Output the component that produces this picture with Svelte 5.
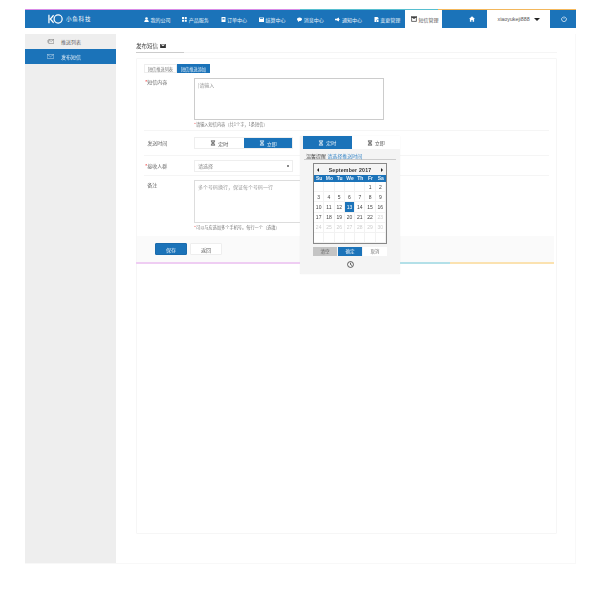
<script>
  const nav = [
    ['user', '我的公司'], ['grid', '产品服务'], ['order', '订单中心'], ['save', '结算中心'],
    ['chat', '消息中心'], ['horn', '通知中心'], ['edit', '变更管理']
  ];
  const week = ['Su', 'Mo', 'Tu', 'We', 'Th', 'Fr', 'Sa'];
  const days = [];
  for (let i = 0; i < 5; i++) days.push({ t: '', c: '' });
  for (let d = 1; d <= 30; d++) days.push({ t: d, c: d === 13 ? 'on' : d > 22 ? 'off' : '' });
  for (let i = 0; i < 7; i++) days.push({ t: '', c: '' });
</script>

{#snippet cal(cls)}
  <svg class={cls} viewBox="0 0 10 10" width="6" height="6"><path d="M1.5 1.5h7M1.5 8.5h7M3 1.5v2.5l2 1-2 1v2.5M7 1.5v2.5l-2 1 2 1v2.5" fill="none" stroke="currentColor" stroke-width="1.4"/></svg>
{/snippet}

<div class="page">
  <div class="strip"></div>
  <header class="top">
    <div class="logo">
      <svg viewBox="0 0 16 10" width="15" height="10"><path d="M1 0.500v9M6 1 2.500 5 6 9" fill="none" stroke="#fff" stroke-width="1.300"/><circle cx="10.800" cy="5" r="4.300" fill="none" stroke="#fff" stroke-width="1.300"/></svg>
      <span>小鱼科技</span>
    </div>
    <nav class="nav">
      {#each nav as [icon, label]}
        <div class="nav-item">
          <svg viewBox="0 0 10 10" width="5" height="5" fill="#fff">
            {#if icon === 'user'}<circle cx="5" cy="3" r="2.600"/><path d="M0.500 10c0-3.500 2-4.500 4.500-4.500s4.500 1 4.500 4.500z"/>
            {:else if icon === 'grid'}<path d="M0 0h4v4H0zM5.500 0h4v4h-4zM0 5.500h4v4H0zM5.500 5.500h4v4h-4z"/>
            {:else if icon === 'order'}<path d="M1 0h8v10H1zM3 2v1.500h4V2zM3 5v1h4V5z" fill-rule="evenodd"/>
            {:else if icon === 'save'}<path d="M0 1h10v9H0zM2 2.500v1.500h6V2.500z" fill-rule="evenodd"/>
            {:else if icon === 'chat'}<path d="M5 1c2.800 0 5 1.600 5 3.600S7.800 8.200 5 8.200L2 10V7.600C.8 7 0 5.900 0 4.600 0 2.600 2.200 1 5 1z"/>
            {:else if icon === 'horn'}<path d="M0 3.500h3L8 1v8L3 6.500H0zM9 4h1v2H9z"/>
            {:else}<path d="M1 0h6l2 2v3H6L4 7v3H1zM6 6l3 0v4H5V7z"/>{/if}
          </svg>
          <span>{label}</span>
        </div>
      {/each}
      <div class="nav-item sms">
        <svg viewBox="0 0 10 10" width="6" height="6"><path d="M0 1h10v1.500H0zM1 3.500v5.500h8V3.500" fill="none" stroke="#333" stroke-width="1.200"/><path d="M1 2l4 3 4-3" fill="#333"/></svg>
        <span>短信管理</span>
      </div>
    </nav>
    <div class="home">
      <svg viewBox="0 0 10 10" width="6" height="6" fill="#fff"><path d="M5 0.500 10 5H8.500v4.500H6V6.500H4v3H1.500V5H0z"/></svg>
    </div>
    <div class="account"><span>xiaoyukeji888</span><i class="caret"></i></div>
    <div class="power">
      <svg viewBox="0 0 10 10" width="6" height="6"><path d="M3 2a4 4 0 1 0 4 0M5 0.500v4" fill="none" stroke="#fff" stroke-width="1.200"/></svg>
    </div>
  </header>

  <div class="body">
    <aside class="side">
      <div class="side-item">
        <svg viewBox="0 0 12 8" width="7" height="5"><path d="M3 .5h8.500v7H3zM3 .5l4 3.500 4.500-3.500M0 3h3M.5 5h2.500" fill="none" stroke="#666" stroke-width=".8"/></svg>
        <span>推送列表</span>
      </div>
      <div class="side-item active">
        <svg viewBox="0 0 12 8" width="7" height="5"><path d="M.5.5h11v7H.5zM.5.5l5.500 4 5.500-4" fill="none" stroke="#dbe9f5" stroke-width=".8"/></svg>
        <span>发布短信</span>
      </div>
    </aside>

    <main class="main">
      <div class="title-row">
        <div class="title">发布短信
          <svg viewBox="0 0 10 7" width="6" height="4" fill="#333"><path d="M0 0h10v7H0zM1 1l4 3 4-3v-.2H1z" fill-rule="evenodd"/></svg>
        </div>
      </div>

      <section class="panel">
        <div class="tabs">
          <div class="tab">短信推送列表</div>
          <div class="tab cur">短信推送添加</div>
        </div>

        <div class="row r1">
          <label class="lab"><b>*</b>短信内容</label>
          <div class="fld">
            <div class="ta big">|请输入</div>
            <p class="hint"><b>*</b>请输入短信内容（共1个字，1条短信）</p>
          </div>
        </div>

        <div class="row r2">
          <label class="lab"><b class="hid">*</b>发送时间</label>
          <div class="toggle">
            <div class="tg">{@render cal('')} 定时</div>
            <div class="tg blue">{@render cal('')} 立即</div>
          </div>
        </div>

        <div class="row r3">
          <label class="lab"><b>*</b>接收人群</label>
          <div class="select"><span>请选择</span><i class="mini"></i></div>
        </div>

        <div class="r4">
          <label class="lab"><b class="hid">*</b>备注</label>
          <div class="fld">
            <div class="ta big2">多个号码换行，保证每个号码一行</div>
            <p class="hint"><b>*</b>可以与应选加多个手机号。每行一个（选填）</p>
          </div>
        </div>

        <div class="actions">
          <button class="btn save">保存</button>
          <button class="btn reset">返回</button>
        </div>
        <div class="rainbow"></div>

        <div class="pop">
          <div class="pop-toggle">
            <div class="pt blue">{@render cal('')} 定时</div>
            <div class="pt">{@render cal('')} 立即</div>
          </div>
          <div class="remind"><span>温馨提醒</span> <em>请选择推送时间</em></div>
          <div class="calendar">
            <div class="cal-head">
              <i class="ar l"></i><strong>September 2017</strong><i class="ar r"></i>
            </div>
            <div class="weeks">
              {#each week as w}<span>{w}</span>{/each}
            </div>
            <div class="days">
              {#each days as d}<span class={d.c}>{d.t}</span>{/each}
            </div>
          </div>
          <div class="pop-btns">
            <div class="pb clear">清空</div>
            <div class="pb ok">确定</div>
            <div class="pb no">取消</div>
          </div>
          <svg class="clock" viewBox="0 0 10 10" width="7" height="7"><circle cx="5" cy="5" r="4.200" fill="none" stroke="#333" stroke-width="1.100"/><path d="M5 2.500V5l2.200 1.500" fill="none" stroke="#333" stroke-width="1.100"/></svg>
        </div>
      </section>
    </main>
  </div>
</div>

<style>
  :global(body) { margin: 0; background: #fff; }
  .page {
    width: 601px; height: 600px; box-sizing: border-box; padding: 9px 25px 36px 25px;
    display: flex; flex-direction: column; filter: blur(.25px);
    font-family: "Noto Sans CJK SC", "Liberation Sans", sans-serif; font-size: 5px; color: #555;
  }
  .strip { height: 1px; flex: none; background: linear-gradient(90deg, #d98be6 0 50%, #57bfd0 50% 75%, #f3b75b 75%); }
  .top { height: 18px; flex: none; display: flex; align-items: stretch; background: #1b73b9; color: #e8f1f8; }
  .logo { width: 108px; padding-left: 23px; box-sizing: border-box; display: flex; align-items: center; gap: 3px; color: #fff; }
  .logo span { font-size: 5.500px; letter-spacing: .8px; font-weight: 400; }
  .nav { display: flex; margin-left: 1px; }
  .nav-item { width: 38.300px; display: flex; align-items: center; gap: 1.500px; padding-left: 10px; box-sizing: border-box; }
  .nav-item.sms { background: #fff; color: #555; width: 37px; margin-left: 3px; padding-left: 6px; }
  .home { width: 44px; margin-left: 1px; display: flex; align-items: center; justify-content: flex-end; padding-right: 12px; box-sizing: border-box; }
  .account { width: 63px; background: #fff; color: #555; display: flex; align-items: center; justify-content: center; gap: 4px; font-family: "Liberation Sans", sans-serif; font-size: 5.300px; }
  .caret { border: 3px solid transparent; border-top: 3.500px solid #222; border-bottom: 0; }
  .power { flex: 1; margin-left: 1px; display: flex; align-items: center; justify-content: center; }

  .body { flex: 1; display: flex; margin-top: 6px; border: 1px solid #f8f8f8; border-top: 0; border-left: 0; }
  .side { width: 91px; flex: none; background: #eee; }
  .side-item { height: 15px; display: flex; align-items: center; padding-left: 22px; gap: 7px; box-sizing: border-box; color: #666; }
  .side-item.active { background: #1b73b9; color: #e8f1f8; }

  .main { flex: 1; padding: 0 18px 29px 20px; display: flex; flex-direction: column; }
  .title-row { height: 18px; flex: none; margin: 0 0 5px; border-bottom: 1px solid #f5f5f5; position: relative; display: flex; align-items: flex-end; }
  .title-row::after { content: ""; position: absolute; left: 0; bottom: -1px; width: 48px; height: 1px; background: #ccc; }
  .title { display: flex; align-items: center; gap: 2px; padding-bottom: 2px; font-size: 5.500px; color: #444; }

  .panel { flex: 1; border: 1px solid #f6f6f6; border-radius: 1px; position: relative; padding: 5px 0 0 0; }
  .tabs { display: flex; margin-left: 7px; height: 9px; }
  .tab { width: 33px; font-size: 4.200px; text-align: center; line-height: 8px; border: .5px solid #eee; box-sizing: border-box; color: #777; }
  .tab.cur { background: #1b73b9; border-color: #1b73b9; color: #e8f1f8; }

  .row, .r4 { display: flex; margin: 0 7px; }
  .row { border-bottom: 1px solid #f5f5f5; }
  .lab { width: 50px; padding-left: 1px; box-sizing: border-box; color: #666; font-size: 5px; line-height: 8px; flex: none; }
  .lab b, .hint b { color: #e33; font-weight: 400; }
  .hid { visibility: hidden; }
  .r1 { margin-top: 5px; height: 52px; }
  .r2 { height: 24px; align-items: center; }
  .r3 { height: 19px; align-items: center; }
  .r4 { padding-top: 4px; height: 56px; }
  .r4 .lab { padding-top: 1px; }
  .fld { width: 190px; }
  .ta { border: 1px solid #ccc; box-sizing: border-box; padding: 2px 3px; color: #999; font-size: 5px; line-height: 7px; }
  .big { height: 42px; }
  .big2 { height: 43px; border-color: #ddd; }
  .hint { margin: 1px 0 0; font-size: 4.200px; line-height: 6px; color: #777; }
  .toggle { width: 99px; height: 12px; display: flex; border: 1px solid #eee; box-sizing: border-box; background: #fff; }
  .tg { flex: 1; display: flex; align-items: center; justify-content: center; gap: 2px; color: #555; }
  .tg.blue { background: #1b73b9; color: #e8f1f8; }
  .select { width: 99px; height: 12px; box-sizing: border-box; border: 1px solid #eee; display: flex; align-items: center; justify-content: space-between; padding: 0 3px; color: #888; }
  .mini { border: 1.500px solid #333; border-radius: 1px; }

  .actions { height: 26px; background: #fafafa; display: flex; align-items: center; padding-left: 18px; gap: 3px; margin-right: 2px; }
  .btn { width: 32px; height: 12px; font: inherit; font-size: 5px; padding: 0; border-radius: 1px; }
  .save { background: #1b73b9; border: 1px solid #1b6bac; color: #e8f1f8; }
  .reset { background: #fff; border: 1px solid #eee; color: #666; }
  .rainbow { height: 2px; background: linear-gradient(90deg, #efcdf3 0 50%, #b3e0e8 50% 75%, #fbe2b0 75%); margin: 0 2px 0 -1px; }

  .pop { position: absolute; left: 163px; top: 77px; width: 100px; height: 138px; background: #f4f4f4; box-sizing: border-box; border-radius: 1px; display: flex; flex-direction: column; align-items: center; box-shadow: 0 0 1px #ddd; }
  .pop-toggle { width: 97px; height: 13px; display: flex; align-self: flex-end; background: #fff; flex: none; }
  .pt { flex: 1; display: flex; align-items: center; justify-content: center; gap: 2px; color: #555; }
  .pt.blue { background: #1b73b9; color: #e8f1f8; }
  .remind { width: 92px; margin-top: 3px; padding: 0 2px; box-sizing: border-box; line-height: 7px; border-bottom: 1px solid #ccc; height: 8px; color: #555; flex: none; }
  .remind em { font-style: normal; color: #3b87c6; }
  .calendar { width: 74px; height: 81px; margin-top: 3px; border: 1px solid #888; box-sizing: border-box; background: #fff; font-family: "Liberation Sans", sans-serif; display: flex; flex-direction: column; flex: none; }
  .cal-head { height: 11px; flex: none; background: #f4f4f4; display: flex; align-items: center; justify-content: space-between; padding: 0 3px; color: #333; font-size: 5.200px; }
  .cal-head strong { letter-spacing: .2px; }
  .ar { border: 2.500px solid transparent; }
  .ar.l { border-right-color: #222; border-left: 0; }
  .ar.r { border-left-color: #222; border-right: 0; }
  .weeks { height: 7px; background: #1b73b9; color: #e8f1f8; display: grid; grid-template-columns: repeat(7, 1fr); text-align: center; line-height: 7px; font-weight: 700; flex: none; }
  .days { flex: 1; display: grid; grid-template-columns: repeat(7, 1fr); grid-template-rows: repeat(6, 1fr); }
  .days span { display: flex; align-items: center; justify-content: center; color: #444; border-right: .5px solid #f2f2f2; border-bottom: .5px solid #f2f2f2; }
  .days .on { background: #1b73b9; color: #fff; }
  .days .off { color: #ccc; }
  .pop-btns { display: flex; margin-top: 3px; width: 74px; justify-content: space-between; flex: none; }
  .pb { width: 24px; height: 9px; line-height: 9px; text-align: center; font-size: 4.500px; }
  .clear { background: #c4c4c4; color: #666; }
  .ok { background: #1b73b9; color: #e8f1f8; }
  .no { background: #fff; color: #777; }
  .clock { margin-top: 5px; }
</style>
